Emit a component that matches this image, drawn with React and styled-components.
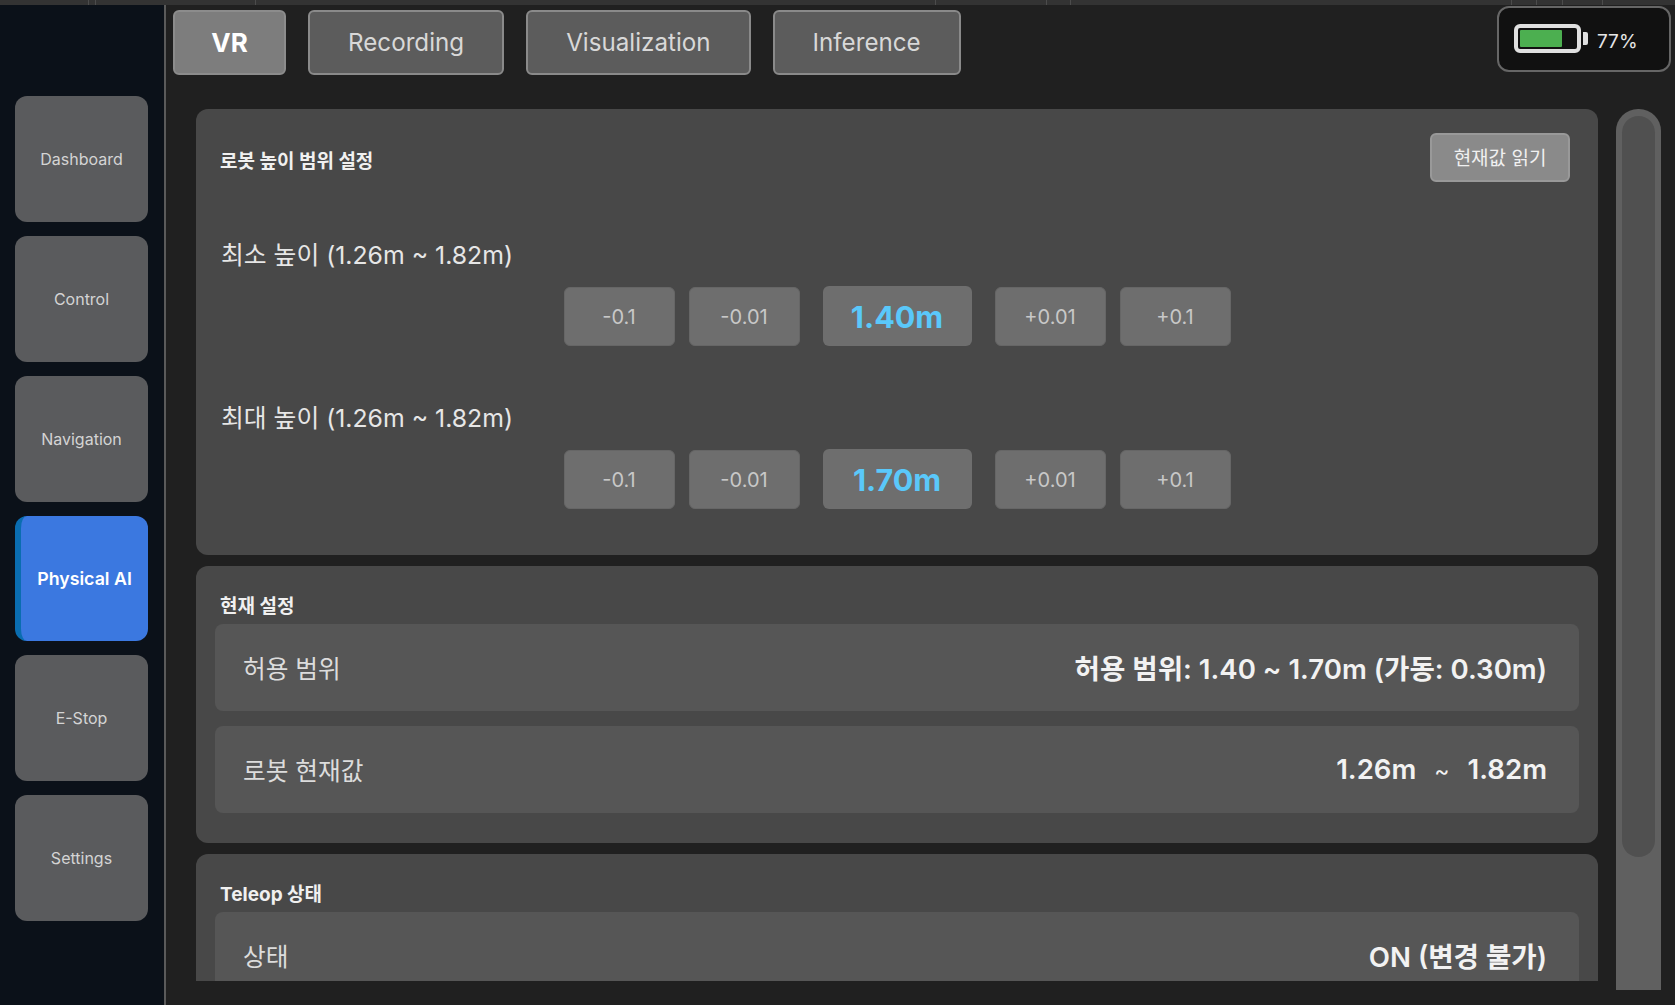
import React from 'react'
import styled, { createGlobalStyle } from 'styled-components'

const GlobalStyle = createGlobalStyle`
  html, body {
    margin: 0;
    padding: 0;
    height: 100%;
    overflow: hidden;
    background: #202020;
    font-family: Inter, "Noto Sans CJK KR", sans-serif;
  }
  * { box-sizing: border-box; }
`

const navItems = ['Dashboard', 'Control', 'Navigation', 'Physical AI', 'E-Stop', 'Settings']
const tabs = ['VR', 'Recording', 'Visualization', 'Inference']
const stripCells = [89, 7, 160, 680, 111, 24, 441, 25, 26, 40]

function HeightControl({ label, value }) {
  return (
    <HeightBlock>
      <HeightLabel>{label}</HeightLabel>
      <StepperRow>
        <StepButton>-0.1</StepButton>
        <StepButton>-0.01</StepButton>
        <ValueBox>{value}</ValueBox>
        <StepButton>+0.01</StepButton>
        <StepButton>+0.1</StepButton>
      </StepperRow>
    </HeightBlock>
  )
}

function BatteryIcon() {
  return (
    <svg width="75" height="30" viewBox="0 0 75 30">
      <rect x="2" y="2" width="63" height="25" rx="4" fill="#111" stroke="#e0e0e0" strokeWidth="4" />
      <rect x="6" y="6" width="42" height="17" rx="1" fill="#4caf50" />
      <path d="M69 8h3a2 2 0 0 1 2 2v9a2 2 0 0 1-2 2h-3z" fill="#e0e0e0" />
    </svg>
  )
}

export default function App() {
  return (
    <Page>
      <GlobalStyle />
      <TopStrip>
        {stripCells.map((w, i) => <StripCell key={i} $w={w} />)}
      </TopStrip>
      <Body>
        <Sidebar>
          {navItems.map(item => (
            <NavButton key={item} $active={item === 'Physical AI'}>{item}</NavButton>
          ))}
        </Sidebar>
        <Main>
          <TabBar>
            <Tabs>
              {tabs.map(tab => (
                <Tab key={tab} $active={tab === 'VR'}>{tab}</Tab>
              ))}
            </Tabs>
            <BatteryBadge>
              <BatteryIcon />
              <BatteryText>77%</BatteryText>
            </BatteryBadge>
          </TabBar>
          <ContentRow>
            <ScrollArea>
              <RangePanel>
                <PanelHead>
                  <PanelTitle>로봇 높이 범위 설정</PanelTitle>
                  <ReadButton>현재값 읽기</ReadButton>
                </PanelHead>
                <HeightControl label="최소 높이 (1.26m ~ 1.82m)" value="1.40m" />
                <HeightControl label="최대 높이 (1.26m ~ 1.82m)" value="1.70m" />
              </RangePanel>
              <Panel>
                <RowTitle>현재 설정</RowTitle>
                <InfoRow>
                  <InfoLabel>허용 범위</InfoLabel>
                  <InfoValue>허용 범위: 1.40 ~ 1.70m (가동: 0.30m)</InfoValue>
                </InfoRow>
                <InfoRow>
                  <InfoLabel>로봇 현재값</InfoLabel>
                  <InfoValue>1.26m<Tilde>~</Tilde>1.82m</InfoValue>
                </InfoRow>
              </Panel>
              <Panel>
                <RowTitle>Teleop 상태</RowTitle>
                <InfoRow>
                  <InfoLabel>상태</InfoLabel>
                  <InfoValue>ON (변경 불가)</InfoValue>
                </InfoRow>
              </Panel>
            </ScrollArea>
            <ScrollTrack>
              <ScrollThumb />
            </ScrollTrack>
          </ContentRow>
        </Main>
      </Body>
    </Page>
  )
}

const Page = styled.div`
  width: 1675px;
  height: 1005px;
  display: flex;
  flex-direction: column;
  overflow: hidden;
  background: #202020;
`
const TopStrip = styled.div`
  height: 5px;
  flex: none;
  display: flex;
  background: #333333;
`
const StripCell = styled.div`
  width: ${p => p.$w}px;
  border-right: 1px solid #4c4c4c;
`
const Body = styled.div`
  flex: 1;
  display: flex;
  min-height: 0;
`
const Sidebar = styled.nav`
  width: 166px;
  flex: none;
  background: #0b1119;
  border-right: 2px solid #5a5a5a;
  padding: 91px 0 0 15px;
  display: flex;
  flex-direction: column;
  gap: 14px;
`
const NavButton = styled.button`
  width: 133px;
  height: ${p => (p.$active ? 125 : 126)}px;
  flex: none;
  border: none;
  border-left: ${p => (p.$active ? '6px solid #0a6db0' : 'none')};
  border-radius: 12px;
  background: ${p => (p.$active ? '#3b78e0' : '#5a5b5d')};
  color: ${p => (p.$active ? '#ffffff' : '#d4d4d4')};
  font: ${p => (p.$active ? '600 17.8px' : '400 16px')} Inter, sans-serif;
  padding: 0;
`
const Main = styled.main`
  flex: 1;
  min-width: 0;
  display: flex;
  flex-direction: column;
`
const TabBar = styled.div`
  height: 104px;
  flex: none;
  display: flex;
  justify-content: space-between;
  align-items: flex-start;
  padding: 1px 4px 0 7px;
`
const Tabs = styled.div`
  display: flex;
  gap: 22px;
  margin-top: 4px;
`
const Tab = styled.button`
  height: 65px;
  padding: ${p => (p.$active ? '0' : '0 38px')};
  width: ${p => (p.$active ? '113px' : 'auto')};
  border: 2px solid ${p => (p.$active ? '#8c8c8c' : '#8a8a8a')};
  border-radius: 6px;
  background: ${p => (p.$active ? '#7d7d7d' : '#5c5c5c')};
  color: ${p => (p.$active ? '#ffffff' : '#d8d8d8')};
  font: ${p => (p.$active ? '700 26px' : '400 24.2px')} Inter, sans-serif;
`
const BatteryBadge = styled.div`
  width: 174px;
  height: 66px;
  display: flex;
  align-items: center;
  gap: 8px;
  padding-left: 15px;
  background: #111111;
  border: 2px solid #666666;
  border-radius: 12px;
`
const BatteryText = styled.span`
  color: #e6e6e6;
  font-size: 19px;
  padding-top: 4px;
`
const ContentRow = styled.div`
  display: flex;
  align-items: flex-start;
  padding-left: 30px;
`
const ScrollArea = styled.div`
  width: 1402px;
  height: 872px;
  overflow: hidden;
  display: flex;
  flex-direction: column;
  gap: 11px;
`
const Panel = styled.section`
  flex: none;
  background: #484848;
  border-radius: 12px;
  padding: 28px 19px 30px;
`
const RangePanel = styled(Panel)`
  height: 446px;
  padding: 24px 28px 0 24px;
`
const PanelHead = styled.div`
  display: flex;
  justify-content: space-between;
  align-items: center;
  height: 49px;
  margin-bottom: 56px;
`
const PanelTitle = styled.h2`
  margin: 0;
  color: #f0f0f0;
  font-size: 19px;
  font-weight: 700;
  position: relative;
  top: 2px;
`
const RowTitle = styled(PanelTitle)`
  padding-left: 5px;
  margin-bottom: 8px;
  line-height: 22px;
`
const ReadButton = styled.button`
  width: 140px;
  height: 49px;
  border: 2px solid #999999;
  border-radius: 6px;
  background: #8a8a8a;
  color: #f0f0f0;
  padding: 0 0 2px;
  font: 400 19px Inter, "Noto Sans CJK KR", sans-serif;
`
const HeightBlock = styled.div`
  margin-bottom: 55px;
`
const HeightLabel = styled.div`
  color: #e6e6e6;
  font-size: 24.8px;
  line-height: 34px;
  margin-bottom: 14px;
  padding-left: 1px;
`
const StepperRow = styled.div`
  display: flex;
  justify-content: center;
  align-items: center;
  gap: 14px;
  margin-right: -4px;
`
const StepButton = styled.button`
  width: 111px;
  height: 59px;
  border: 1px solid #666666;
  border-radius: 6px;
  background: #6e6e6e;
  color: #c8c8c8;
  padding: 1px 0 0;
  font: 400 20px Inter, sans-serif;
`
const ValueBox = styled.div`
  width: 149px;
  height: 60px;
  margin: 0 9px;
  display: flex;
  align-items: center;
  justify-content: center;
  background: #6e6e6e;
  border-radius: 6px;
  color: #5ac8fa;
  font-size: 30.5px;
  font-weight: 700;
`
const InfoRow = styled.div`
  height: 87px;
  display: flex;
  justify-content: space-between;
  align-items: center;
  padding: 0 32px 2px 28px;
  background: #565656;
  border-radius: 8px;
  & + & { margin-top: 15px; }
`
const InfoLabel = styled.span`
  color: #dcdcdc;
  font-size: 24.7px;
`
const InfoValue = styled.span`
  color: #f2f2f2;
  font-size: 27.6px;
  font-weight: 600;
`
const Tilde = styled.span`
  margin: 0 18px;
  font-size: 23px;
  font-weight: 400;
`
const ScrollTrack = styled.div`
  width: 45px;
  height: 881px;
  margin-left: 18px;
  padding: 7px 6px 0;
  background: #606060;
  border-radius: 22px 22px 0 0;
`
const ScrollThumb = styled.div`
  height: 741px;
  background: #505050;
  border-radius: 17px;
`
